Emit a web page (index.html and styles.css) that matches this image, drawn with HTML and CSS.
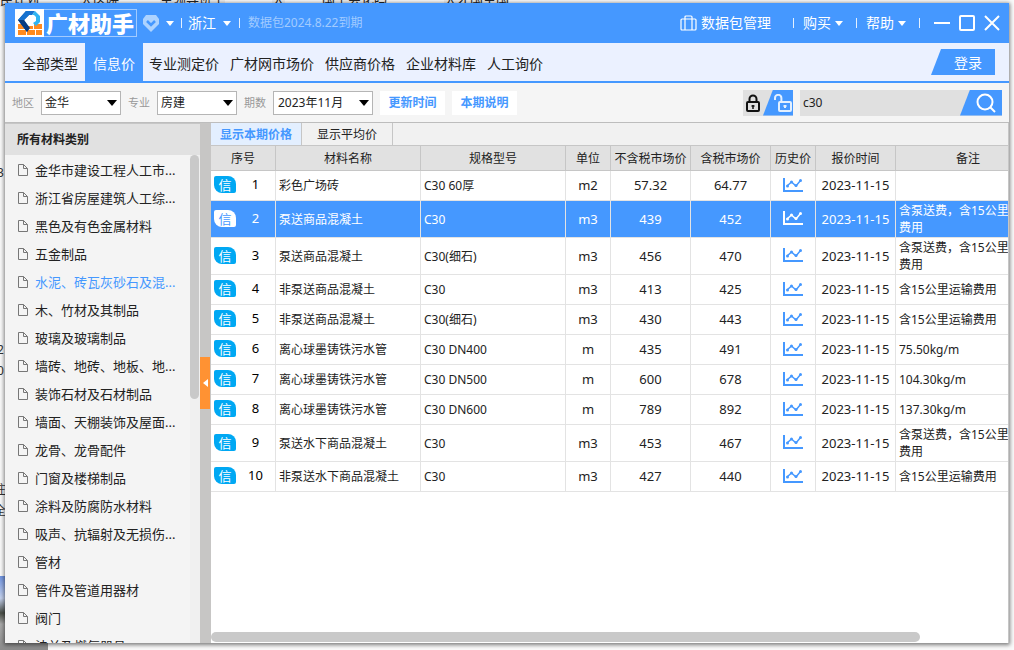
FILE: index.html
```html
<!DOCTYPE html>
<html lang="zh-CN">
<head>
<meta charset="utf-8">
<title>广材助手</title>
<link rel="stylesheet" href="styles.css">
</head>
<body>
<svg class="defs" width="0" height="0" aria-hidden="true">
  <symbol id="doc" viewBox="0 0 12 14"><path d="M1.500 1.500h5l4 4v7h-9zM6.500 1.500v4h4" fill="none" stroke="#777" stroke-width="1"/></symbol>
  <symbol id="chart" viewBox="0 0 20 14"><path d="M1 0v13h19" fill="none" stroke="currentColor" stroke-width="2"/><path d="M4 8l4.500-4 4.500 4 4.500-5.500" fill="none" stroke="currentColor" stroke-width="1.500"/><circle cx="4.500" cy="8" r="1.500" fill="currentColor"/><circle cx="8.500" cy="4" r="1.500" fill="currentColor"/><circle cx="13" cy="7.500" r="1.500" fill="currentColor"/><circle cx="17.500" cy="2.500" r="1.500" fill="currentColor"/></symbol>
  <symbol id="caret" viewBox="0 0 8 5"><path d="M0 0h8l-4 5z" fill="currentColor"/></symbol>
</svg>

<div class="desktop" aria-hidden="true">
  <div class="desk-top"><span>民计划</span><span>大医院</span><span>主领导班子</span><span>大</span><span>国王会化吗</span><span>大才国主国</span></div>
  <span class="desk-side s1">3</span><span class="desk-side s2">2</span><span class="desk-side s3">0</span><span class="desk-side s4">注</span><span class="desk-side s5">全</span>
  <div class="desk-photo"></div>
</div>

<main class="window">
  <header class="titlebar">
    <div class="logo">
      <svg width="29" height="28" viewBox="0 0 29 28" aria-hidden="true"><rect width="29" height="28" fill="#fff"/><path d="M3 15h7v5H3zM19 15h8v5h-8zM13 17h5v3h-5zM3 21h8v5H3zM12 21h8v5h-8zM21 21h6v5h-6z" fill="#ff8a1f"/><path d="M11 2L3 11l9 12 2-4-5-8 8-8z" fill="#0b4fa8"/><path d="M3 11h6l6 8-3 4z" fill="#083a80"/><path d="M11 2h9l-3 4h-3l-5 5H3z" fill="#1672cf"/><path d="M17 6l3-4 5 5v6l-4 4-3-3 3-2V8l-2-2z" fill="#2fb4f2"/></svg>
      <strong>广材助手</strong>
    </div>
    <button class="plain vip" aria-label="会员"><svg width="16" height="17" viewBox="0 0 16 17"><path d="M3 0h10l3 4v5l-8 8-8-8V4z" fill="#add3ff"/><path d="M4 6l4 4 4-4" fill="none" stroke="#4598ff" stroke-width="2.500"/></svg><svg width="8" height="5"><use href="#caret"/></svg></button>
    <i class="bar"></i>
    <button class="plain city">浙江<svg width="8" height="5"><use href="#caret"/></svg></button>
    <i class="bar"></i>
    <span class="expire">数据包2024.8.22到期</span>
    <button class="plain package"><svg width="17" height="16" viewBox="0 0 17 16" fill="none" stroke="#fff" stroke-width="1.200"><rect x="1" y="4" width="15" height="11" rx="1"/><path d="M5 15V2q0-1 1-1h5q1 0 1 1v13"/></svg>数据包管理</button>
    <i class="bar"></i>
    <button class="plain">购买<svg width="8" height="5"><use href="#caret"/></svg></button>
    <i class="bar"></i>
    <button class="plain">帮助<svg width="8" height="5"><use href="#caret"/></svg></button>
    <i class="bar"></i>
    <div class="wincontrols">
      <button class="plain" aria-label="最小化"><svg width="16" height="16" viewBox="0 0 16 16"><path d="M0 8h16" stroke="#fff" stroke-width="2"/></svg></button>
      <button class="plain" aria-label="最大化"><svg width="16" height="16" viewBox="0 0 16 16"><rect x="1" y="1" width="14" height="14" rx="1" fill="none" stroke="#fff" stroke-width="2"/></svg></button>
      <button class="plain" aria-label="关闭"><svg width="16" height="16" viewBox="0 0 16 16"><path d="M1 1l14 14M15 1L1 15" stroke="#fff" stroke-width="2"/></svg></button>
    </div>
  </header>

  <nav class="nav">
    <a href="#">全部类型</a><a href="#" class="active">信息价</a><a href="#">专业测定价</a><a href="#">广材网市场价</a><a href="#">供应商价格</a><a href="#">企业材料库</a><a href="#">人工询价</a>
    <button class="login">登录</button>
  </nav>

  <form class="filters">
    <label for="area">地区</label>
    <span class="select"><select id="area"><option>金华</option></select><svg width="10" height="6" viewBox="0 0 8 5" preserveAspectRatio="none"><path d="M0 0h8l-4 5z"/></svg></span>
    <label for="major">专业</label>
    <span class="select"><select id="major"><option>房建</option></select><svg width="10" height="6" viewBox="0 0 8 5" preserveAspectRatio="none"><path d="M0 0h8l-4 5z"/></svg></span>
    <label for="period">期数</label>
    <span class="select wide"><select id="period"><option>2023年11月</option></select><svg width="10" height="6" viewBox="0 0 8 5" preserveAspectRatio="none"><path d="M0 0h8l-4 5z"/></svg></span>
    <button type="button" class="action">更新时间</button>
    <button type="button" class="action">本期说明</button>
    <div class="locks">
      <button type="button" class="plain locked" aria-label="锁定"><svg width="14" height="18" viewBox="0 0 14 18"><rect x="1" y="8" width="12" height="9" rx="1" fill="none" stroke="#111" stroke-width="2"/><path d="M3.500 8V5a3.500 3.500 0 017 0v3" fill="none" stroke="#111" stroke-width="2"/><path d="M7 11v4M5.500 12h3" stroke="#111" stroke-width="1.500"/></svg></button>
      <button type="button" class="plain unlocked" aria-label="解锁"><svg width="18" height="18" viewBox="0 0 18 18" fill="none" stroke="#e3f0ff" stroke-width="2"><rect x="5" y="8" width="12" height="9" rx="1"/><path d="M1 6V4a3.200 3.200 0 016.400 0v4M11 11v3M9.500 12h3"/></svg></button>
    </div>
    <div class="search">
      <input type="text" value="c30" aria-label="搜索">
      <button type="button" aria-label="搜索"><svg width="20" height="20" viewBox="0 0 20 20" fill="none" stroke="#fff" stroke-width="2"><circle cx="9" cy="9" r="7.500"/><path d="M14 14l5 5"/></svg></button>
    </div>
  </form>

  <div class="content">
    <aside class="sidebar">
      <h2>所有材料类别</h2>
      <div class="tree">
        <ul>
          <li><svg><use href="#doc"/></svg><a href="#">金华市建设工程人工市...</a></li>
          <li><svg><use href="#doc"/></svg><a href="#">浙江省房屋建筑人工综...</a></li>
          <li><svg><use href="#doc"/></svg><a href="#">黑色及有色金属材料</a></li>
          <li><svg><use href="#doc"/></svg><a href="#">五金制品</a></li>
          <li class="current"><svg><use href="#doc"/></svg><a href="#">水泥、砖瓦灰砂石及混...</a></li>
          <li><svg><use href="#doc"/></svg><a href="#">木、竹材及其制品</a></li>
          <li><svg><use href="#doc"/></svg><a href="#">玻璃及玻璃制品</a></li>
          <li><svg><use href="#doc"/></svg><a href="#">墙砖、地砖、地板、地...</a></li>
          <li><svg><use href="#doc"/></svg><a href="#">装饰石材及石材制品</a></li>
          <li><svg><use href="#doc"/></svg><a href="#">墙面、天棚装饰及屋面...</a></li>
          <li><svg><use href="#doc"/></svg><a href="#">龙骨、龙骨配件</a></li>
          <li><svg><use href="#doc"/></svg><a href="#">门窗及楼梯制品</a></li>
          <li><svg><use href="#doc"/></svg><a href="#">涂料及防腐防水材料</a></li>
          <li><svg><use href="#doc"/></svg><a href="#">吸声、抗辐射及无损伤...</a></li>
          <li><svg><use href="#doc"/></svg><a href="#">管材</a></li>
          <li><svg><use href="#doc"/></svg><a href="#">管件及管道用器材</a></li>
          <li><svg><use href="#doc"/></svg><a href="#">阀门</a></li>
          <li><svg><use href="#doc"/></svg><a href="#">法兰及燃气器具</a></li>
        </ul>
        <div class="vscroll"><i></i></div>
      </div>
    </aside>
    <div class="splitter"><button aria-label="收起"><svg width="5" height="8" viewBox="0 0 5 8"><path d="M5 0v8L0 4z" fill="#fff"/></svg></button></div>
    <section class="results">
      <div class="tabs"><button class="on">显示本期价格</button><button>显示平均价</button></div>
      <div class="tablewrap">
        <table>
          <colgroup><col class="c-no"><col class="c-text"><col class="c-text"><col class="c-small"><col class="c-mid"><col class="c-mid"><col class="c-small"><col class="c-mid"><col class="c-text"></colgroup>
          <thead><tr><th>序号</th><th>材料名称</th><th>规格型号</th><th>单位</th><th>不含税市场价</th><th>含税市场价</th><th>历史价</th><th>报价时间</th><th>备注</th></tr></thead>
          <tbody>
            <tr><td><div class="no"><b>信</b><span>1</span></div></td><td>彩色广场砖</td><td>C30 60厚</td><td>m2</td><td>57.32</td><td>64.77</td><td><svg><use href="#chart"/></svg></td><td>2023-11-15</td><td></td></tr>
            <tr class="tall selected"><td><div class="no"><b>信</b><span>2</span></div></td><td>泵送商品混凝土</td><td>C30</td><td>m3</td><td>439</td><td>452</td><td><svg><use href="#chart"/></svg></td><td>2023-11-15</td><td>含泵送费，含15公里<br>费用</td></tr>
            <tr class="tall"><td><div class="no"><b>信</b><span>3</span></div></td><td>泵送商品混凝土</td><td>C30(细石)</td><td>m3</td><td>456</td><td>470</td><td><svg><use href="#chart"/></svg></td><td>2023-11-15</td><td>含泵送费，含15公里<br>费用</td></tr>
            <tr><td><div class="no"><b>信</b><span>4</span></div></td><td>非泵送商品混凝土</td><td>C30</td><td>m3</td><td>413</td><td>425</td><td><svg><use href="#chart"/></svg></td><td>2023-11-15</td><td>含15公里运输费用</td></tr>
            <tr><td><div class="no"><b>信</b><span>5</span></div></td><td>非泵送商品混凝土</td><td>C30(细石)</td><td>m3</td><td>430</td><td>443</td><td><svg><use href="#chart"/></svg></td><td>2023-11-15</td><td>含15公里运输费用</td></tr>
            <tr><td><div class="no"><b>信</b><span>6</span></div></td><td>离心球墨铸铁污水管</td><td>C30 DN400</td><td>m</td><td>435</td><td>491</td><td><svg><use href="#chart"/></svg></td><td>2023-11-15</td><td>75.50kg/m</td></tr>
            <tr><td><div class="no"><b>信</b><span>7</span></div></td><td>离心球墨铸铁污水管</td><td>C30 DN500</td><td>m</td><td>600</td><td>678</td><td><svg><use href="#chart"/></svg></td><td>2023-11-15</td><td>104.30kg/m</td></tr>
            <tr><td><div class="no"><b>信</b><span>8</span></div></td><td>离心球墨铸铁污水管</td><td>C30 DN600</td><td>m</td><td>789</td><td>892</td><td><svg><use href="#chart"/></svg></td><td>2023-11-15</td><td>137.30kg/m</td></tr>
            <tr class="tall"><td><div class="no"><b>信</b><span>9</span></div></td><td>泵送水下商品混凝土</td><td>C30</td><td>m3</td><td>453</td><td>467</td><td><svg><use href="#chart"/></svg></td><td>2023-11-15</td><td>含泵送费，含15公里<br>费用</td></tr>
            <tr><td><div class="no"><b>信</b><span>10</span></div></td><td>非泵送水下商品混凝土</td><td>C30</td><td>m3</td><td>427</td><td>440</td><td><svg><use href="#chart"/></svg></td><td>2023-11-15</td><td>含15公里运输费用</td></tr>
          </tbody>
        </table>
      </div>
      <div class="hscroll"><i></i></div>
    </section>
  </div>
</main>
</body>
</html>
```
FILE: styles.css
```css
* { box-sizing: border-box; }
body {
  margin: 0;
  height: 100vh;
  padding: 3px 5px 7px;
  overflow: hidden;
  background: #fafafa;
  color: #222;
  font: 12px/16px "Noto Sans", "Noto Sans CJK SC", sans-serif;
}
button, input, select { font: inherit; color: inherit; border: 0; padding: 0; margin: 0; border-radius: 0; }
button { background: none; white-space: nowrap; }
svg { display: block; flex: none; }
a { color: inherit; text-decoration: none; }
ul { list-style: none; margin: 0; padding: 0; }
.defs { position: absolute; }

/* Desktop showing behind the window */
.desktop { position: absolute; inset: 0; overflow: hidden; color: #333; }
.desk-top { position: absolute; top: -9px; left: 0; display: grid; grid-template-columns: 80px 80px 112px 50px 122px 80px; justify-items: start; white-space: nowrap; font-size: 13px; color: #222; }
.desk-top span { background: #ececec; }
.desk-side { position: absolute; left: -3px; }
.s1 { top: 165px; }
.s2 { top: 342px; }
.s3 { top: 363px; }
.s4 { top: 482px; left: -6px; }
.s5 { top: 503px; left: -6px; }
.desk-photo { position: absolute; left: 0; bottom: 0; width: 48px; height: 74px; background: linear-gradient(#6f93e0, #c5d2ee 30%, #4a4f48 50%, #aaa 65%, #8c8c8c); }

.window {
  position: relative;
  height: 100%;
  display: flex;
  flex-direction: column;
  background: #f5f5f5;
  box-shadow: 0 1px 4px 1px rgba(0, 0, 0, .5);
  overflow: hidden;
}

.titlebar {
  flex: none;
  height: 40px;
  display: flex;
  align-items: center;
  gap: 10px;
  padding: 0 9px 0 10px;
  background: #4598ff;
  color: #fff;
}
.titlebar .plain { display: flex; align-items: center; gap: 4px; font-size: 14px; line-height: 20px; }
.logo { display: flex; align-items: center; width: 122px; height: 28px; border: 1px solid #a2cbff; border-left: 0; }
.logo strong { font: 900 22px/24px "Noto Sans CJK SC", sans-serif; padding: 0 0 2px 2px; white-space: nowrap; }
.titlebar .vip { margin-left: -4px; margin-right: -3px; gap: 7px; }
.titlebar .city { margin: 0 -2px 0 -4px; gap: 7px; }
.bar { width: 1px; height: 10px; background: #e3f0ff; }
.expire { color: #a2cbff; margin-left: -2px; }
.titlebar .package { margin-left: auto; margin-right: 12px; }
.titlebar .package + .bar ~ .plain { margin: 0 3px 0 -1px; }
.wincontrols { display: flex; gap: 9px; margin-left: 4px; }

.nav {
  flex: none;
  height: 40px;
  display: flex;
  align-items: stretch;
  padding: 0 14px 0 9px;
  border-bottom: 2px solid #4598ff;
  background: #ebf1ff;
  font-size: 14px;
  line-height: 41px;
}
.nav a { padding: 0 6px; white-space: nowrap; }
.nav a:first-child { padding: 0 7px 0 8px; }
.nav .active { padding: 0 8px; background: #4598ff; color: #fff; }
.nav .active + a ~ a { padding: 0 6px 0 5px; }
.login {
  margin: 6px 0 6px auto;
  width: 64px;
  line-height: 28px;
  padding-left: 10px;
  background: #4598ff;
  color: #fff;
  clip-path: polygon(10px 0, 100% 0, 100% 100%, 0 100%);
}

.filters { flex: none; height: 39px; display: flex; align-items: center; gap: 7px; padding: 0 7px; }
.filters label { font-size: 11px; color: #999; }
.select { position: relative; width: 80px; height: 24px; }
.select.wide { width: 100px; }
.select select { width: 100%; height: 100%; padding: 0 3px; appearance: none; background: #fff; border: 1px solid #b5b5b5; }
.wide select { padding-left: 4px; }
.select svg { position: absolute; right: 4px; top: 9px; pointer-events: none; }
.action { width: 65px; height: 24px; background: #fff; color: #4598ff; font-weight: 700; }
.locks { display: flex; width: 50px; height: 26px; margin-left: auto; background: #e0e0e0; }
.locked { padding: 0 0 0 3px; width: 20px; }
.unlocked { width: 30px; padding-left: 11px; background: #4598ff; clip-path: polygon(10px 0, 100% 0, 100% 100%, 0 100%); }
.search { display: flex; width: 202px; height: 26px; background: #e0e0e0; }
.search input { flex: 1; min-width: 0; padding: 0 3px; background: none; }
.search button { width: 42px; padding-left: 16px; background: #4598ff; clip-path: polygon(10px 0, 100% 0, 100% 100%, 0 100%); }

.content { flex: 1; min-height: 0; display: flex; border-top: 1px solid #bdbdbd; }
.sidebar { flex: none; width: 195px; display: flex; flex-direction: column; border-top: 1px solid #c6c6c6; background: #f4f4f4; }
.sidebar h2 { flex: none; margin: 0; padding-left: 12px; font-size: 12px; line-height: 31px; background: #e1e1e1; }
.tree { flex: 1; min-height: 0; display: flex; overflow: hidden; }
.tree ul { flex: 1; }
.tree li { height: 28px; display: flex; align-items: center; gap: 6px; padding: 2px 0 0 12px; font-size: 13px; line-height: 18px; white-space: nowrap; }
.tree li svg { width: 12px; height: 14px; }
.tree .current { color: #4598ff; }
.vscroll { width: 10px; background: #f0f0f0; }
.vscroll i { display: block; width: 9px; height: 50%; border-radius: 5px; background: #c9c9c9; }
.splitter { flex: none; width: 11px; display: flex; align-items: center; background: #c7c6c5; }
.splitter button { width: 10px; height: 52px; padding-left: 3px; background: #ff9233; }

.results { flex: 1; min-width: 0; display: flex; flex-direction: column; background: #fff; border-right: 1px solid #c6c6c6; }
.tabs { flex: none; height: 22px; display: flex; background: #f1f1f1; }
.tabs button { width: 91px; line-height: 24px; border-right: 1px solid #c6c6c6; }
.tabs .on { background: #e3efff; color: #4598ff; font-weight: 700; }
.tablewrap { flex: 1; min-height: 0; overflow: hidden; }
table { table-layout: fixed; width: 830px; border-collapse: separate; border-spacing: 0; }
.c-no { width: 65px; }
.c-text { width: 145px; }
.c-small { width: 45px; }
.c-mid { width: 80px; }
th { height: 26px; padding: 2px 0 0; background: #e1e1e1; border: solid #c6c6c6; border-width: 1px 1px 1px 0; font-weight: 400; white-space: nowrap; }
td { height: 30px; padding: 0 3px; border: solid #e3e3e3; border-width: 0 1px 1px 0; line-height: 17px; white-space: nowrap; text-align: center; }
.tall td { height: 37px; }
td:nth-child(2), td:nth-child(3), td:nth-child(9) { text-align: left; }
td:nth-child(n + 4):nth-child(-n + 8) { font-size: 13px; }
.selected td { background: #4598ff; color: #fff; }
td svg { width: 20px; height: 14px; margin: 0 auto; color: #4598ff; }
.selected svg { color: #fff; }
td:nth-child(1), td:nth-child(7) { padding-bottom: 2px; }
.no { display: flex; align-items: center; font-size: 13px; }
.no b { width: 22px; height: 17px; border-radius: 2px 8px 2px 8px; background: #00a8f3; color: #fff; font: 400 13px/17px "Noto Sans CJK SC", sans-serif; }
.no span { flex: 1; padding-left: 3px; color: #000; }
.selected .no b { background: #fff; color: #4598ff; }
.selected .no span { color: #fff; }
.hscroll { flex: none; height: 11px; }
.hscroll i { display: block; width: 89%; height: 10px; border-radius: 5px; background: #c9c9c9; }
```
